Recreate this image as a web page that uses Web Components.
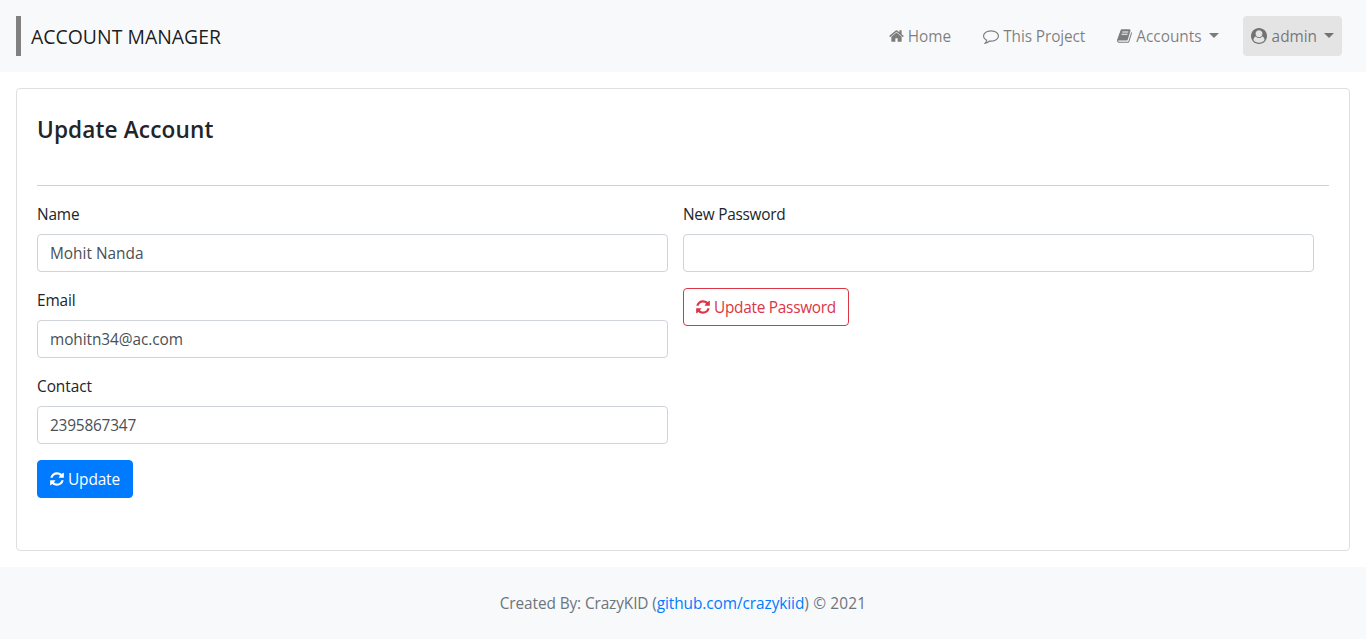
<!DOCTYPE html>
<html lang="en">
<head>
<meta charset="utf-8">
<title>Account Manager</title>
<style>
html,body{margin:0;height:100%;background:#fff}
body{font:400 15.4px/24px "Open Sans","Noto Sans",sans-serif;color:#212529;overflow:hidden}
</style>
</head>
<body>
<account-page></account-page>
<script>
const ICONS = {
home:'M1472 992v480q0 26-19 45t-45 19h-384v-384h-256v384h-384q-26 0-45-19t-19-45v-480q0-1 .5-3t.5-3l575-474 575 474q1 2 1 6zm223-69l-62 74q-8 9-21 11h-3q-13 0-21-7l-692-577-692 577q-12 8-24 7-13-2-21-11l-62-74q-8-10-7-23.5t11-21.5l719-599q32-26 76-26t76 26l244 204v-195q0-14 9-23t23-9h192q14 0 23 9t9 23v408l219 182q10 8 11 21.5t-7 23.5z',
refresh:'M1639 1056q0 5-1 7-64 268-268 434.5t-478 166.5q-146 0-282.5-55t-243.5-157l-129 129q-19 19-45 19t-45-19-19-45v-448q0-26 19-45t45-19h448q26 0 45 19t19 45-19 45l-137 137q71 66 161 102t187 36q134 0 250-65t186-179q11-17 53-117 8-23 30-23h192q13 0 22.5 9.5t9.5 22.5zm25-800v448q0 26-19 45t-45 19h-448q-26 0-45-19t-19-45 19-45l138-138q-148-137-349-137-134 0-250 65t-186 179q-11 17-53 117-8 23-30 23h-199q-13 0-22.5-9.5t-9.5-22.5v-7q65-268 270-434.5t480-166.5q146 0 284 55.5t245 156.5l130-129q19-19 45-19t45 19 19 45z',
comment:'M896 384q-204 0-381.5 69.5t-282 187.5-104.5 255q0 112 71.5 213.5t201.5 175.5l87 50-27 96q-24 91-70 172 152-63 275-171l43-38 57 6q69 8 130 8 204 0 381.5-69.5t282-187.5 104.5-255-104.5-255-282-187.5-381.5-69.5zm896 512q0 174-120 321.5t-326 233-450 85.5q-70 0-145-8-198 175-460 242-49 14-114 22h-5q-15 0-27-10.5t-16-27.5v-1q-3-4-.5-12t2-10 4.5-9.5l6-9 7-8.5 8-9q7-8 31-34.5t34.5-38 31-39.5 32.5-51 27-59 26-76q-157-89-247.5-220t-90.5-281q0-130 71-248.5t191-204.5 286-136.5 348-50.5 348 50.5 286 136.5 191 204.5 71 248.5z',
book:'M1703 478q40 57 18 129l-275 906q-19 64-76.5 107.5t-122.5 43.5h-923q-77 0-148.5-53.5t-99.5-131.5q-24-67-2-127 0-4 3-27t4-37q1-8-3-21.5t-3-19.5q2-11 8-21t16.5-23.5 16.5-23.5q23-38 45-91.5t30-91.5q3-10 .5-30t-.5-28q3-11 17-28t17-23q21-36 42-92t25-90q1-9-2.5-32t.5-28q4-13 22-30.5t22-22.5q19-26 42.5-84.5t27.5-96.5q1-8-3-25.5t-2-26.5q2-8 9-18t18-23 17-21q8-12 16.5-30.5t15-35 16-36 19.5-32 26.5-23.5 36-11.5 47.5 5.5l-1 3q38-9 51-9h761q74 0 114 56t18 130l-274 906q-36 119-71.5 153.5t-128.5 34.5h-869q-27 0-38 15-11 16-1 43 24 70 144 70h923q29 0 56-15.5t35-41.5l300-987q7-22 5-57 38 15 59 43zm-1064 2q-4 13 2 22.5t20 9.5h608q13 0 25.5-9.5t16.5-22.5l21-64q4-13-2-22.5t-20-9.5h-608q-13 0-25.5 9.5t-16.5 22.5zm-83 256q-4 13 2 22.5t20 9.5h608q13 0 25.5-9.5t16.5-22.5l21-64q4-13-2-22.5t-20-9.5h-608q-13 0-25.5 9.5t-16.5 22.5z',
user:'M1523 1339q-22-155-87.5-257.5t-184.5-118.5q-67 74-159.5 115.5t-195.5 41.5-195.5-41.5-159.5-115.5q-119 16-184.5 118.5t-87.5 257.5q106 150 271 237.5t356 87.5 356-87.5 271-237.5zm-243-699q0-159-112.5-271.5t-271.5-112.5-271.5 112.5-112.5 271.5 112.5 271.5 271.5 112.5 271.5-112.5 112.5-271.5zm512 256q0 182-71 347.5t-190.5 286-285.5 191.5-349 71-349-71-285.5-191.5-190.5-286-71-347.5 71-348 191-286 286-191 348-71 348 71 286 191 191 286 71 348z'
};
function define(name, html, extra){
  const t = document.createElement('template');
  t.innerHTML = html;
  customElements.define(name, class extends HTMLElement{
    constructor(){ super(); this.attachShadow({mode:'open'}).appendChild(t.content.cloneNode(true)); }
    connectedCallback(){ if(extra) extra(this, this.shadowRoot); }
  });
}
// Spreads its text evenly over a given advance width.
define('fit-text', `<style>:host{display:inline-block;white-space:pre;flex:none}</style><slot></slot>`, el => {
  const w = +el.getAttribute('w'), r = document.createRange();
  r.selectNodeContents(el);
  const n = el.textContent.length;
  el.style.letterSpacing = ((w - r.getBoundingClientRect().width) / n) + 'px';
  el.style.width = w + 'px';
});
define('ui-icon', `<style>:host{display:inline-block;height:16px;flex:none}svg{display:block;height:16px;width:100%;fill:currentColor}</style><svg preserveAspectRatio="xMidYMid meet"><path/></svg>`, (el, s) => {
  const w = +(el.getAttribute('w') || 16);
  el.style.width = w + 'px';
  const u = w * 112;
  s.querySelector('svg').setAttribute('viewBox', `${(1792-u)/2} 0 ${u} 1792`);
  s.querySelector('path').setAttribute('d', ICONS[el.getAttribute('name')]);
});
define('nav-item', `<style>
:host{display:flex;align-items:center;box-sizing:border-box;height:40px;padding:0 8px;border-radius:4px;color:rgba(0,0,0,.5)}
:host([active]){background:#e4e4e4}
i{display:none;margin:-2px 0 0 7px;border:5px solid transparent;border-top-color:currentColor;border-bottom:0}
:host([menu]) i{display:block}
</style><slot></slot><i></i>`);
define('top-bar', `<style>
:host{display:flex;justify-content:space-between;align-items:center;height:72px;box-sizing:border-box;padding:0 24px 0 16px;background:#f8f9fb}
.brand{border-left:5px solid #808080;height:40px;line-height:41px;padding-left:10px;font-size:19.4px;color:rgba(0,0,0,.9)}
nav{display:flex;gap:16px}
nav fit-text{margin-left:4px;padding-top:2px}
nav-item[active] fit-text{margin-left:5px}
</style>
<div class="brand"><fit-text w="190">ACCOUNT MANAGER</fit-text></div>
<nav>
<nav-item><ui-icon name="home" w="15"></ui-icon><fit-text w="43.5">Home</fit-text></nav-item>
<nav-item><ui-icon name="comment"></ui-icon><fit-text w="82">This Project</fit-text></nav-item>
<nav-item menu><ui-icon name="book" w="15"></ui-icon><fit-text w="65.4">Accounts</fit-text></nav-item>
<nav-item menu active><ui-icon name="user"></ui-icon><fit-text w="45.4">admin</fit-text></nav-item>
</nav>`);
define('form-field', `<style>
:host{display:block;margin-bottom:16px}
label{display:block;height:31px;padding-top:1px}
input{display:block;box-sizing:border-box;width:100%;height:38px;border:1px solid #ced4da;border-radius:4px;padding:0 12px;background:#fff;font:inherit;color:#495057;outline:0}
</style><label><slot></slot></label><input>`, (el, s) => {
  const i = s.querySelector('input');
  i.value = el.getAttribute('value') || '';
  i.style.letterSpacing = (el.getAttribute('spacing') || 0) + 'px';
});
define('ui-button', `<style>
:host{display:inline-flex;align-items:center;height:38px;box-sizing:border-box;padding:0 12px;border:1px solid;border-radius:4px;gap:4px;vertical-align:top}
:host([kind=primary]){background:#007bff;border-color:#007bff;color:#fff}
:host([kind=danger]){color:#dc3545}
::slotted(fit-text){padding-top:2px}
</style><slot></slot>`);
define('account-card', `<style>
:host{display:block;box-sizing:border-box;height:463px;margin:16px;padding:24px 20px 0;border:1px solid #dfdfdf;border-radius:4px;background:#fff}
h4{margin:0;font-weight:600;font-size:22.6px;line-height:34px;height:72px;border-bottom:1px solid #ced1d9;margin-bottom:16px}
.cols{display:grid;grid-template-columns:631px 631px;gap:15px}
</style>
<h4><fit-text w="176.5">Update Account</fit-text></h4>
<div class="cols">
<div>
<form-field value="Mohit Nanda" spacing="0"><fit-text w="42.5">Name</fit-text></form-field>
<form-field value="mohitn34@ac.com" spacing="-0.08"><fit-text w="38.5">Email</fit-text></form-field>
<form-field value="2395867347" spacing="-0.2"><fit-text w="55">Contact</fit-text></form-field>
<ui-button kind="primary"><ui-icon name="refresh" w="14"></ui-icon><fit-text w="52">Update</fit-text></ui-button>
</div>
<div>
<form-field><fit-text w="102.5">New Password</fit-text></form-field>
<ui-button kind="danger"><ui-icon name="refresh" w="14"></ui-icon><fit-text w="122">Update Password</fit-text></ui-button>
</div>
</div>`);
define('page-footer', `<style>
:host{display:flex;justify-content:center;align-items:center;height:72px;background:#f8f9fb;color:#6c757d}
fit-text{padding-top:2px}
a{color:#007bff;text-decoration:none}
</style><fit-text w="157">Created By: CrazyKID (</fit-text><a><fit-text w="147.5">github.com/crazykiid</fit-text></a><fit-text w="62">) © 2021</fit-text>`);
define('account-page', `<style>:host{display:block}</style><top-bar></top-bar><account-card></account-card><page-footer></page-footer>`);
</script>
</body>
</html>
